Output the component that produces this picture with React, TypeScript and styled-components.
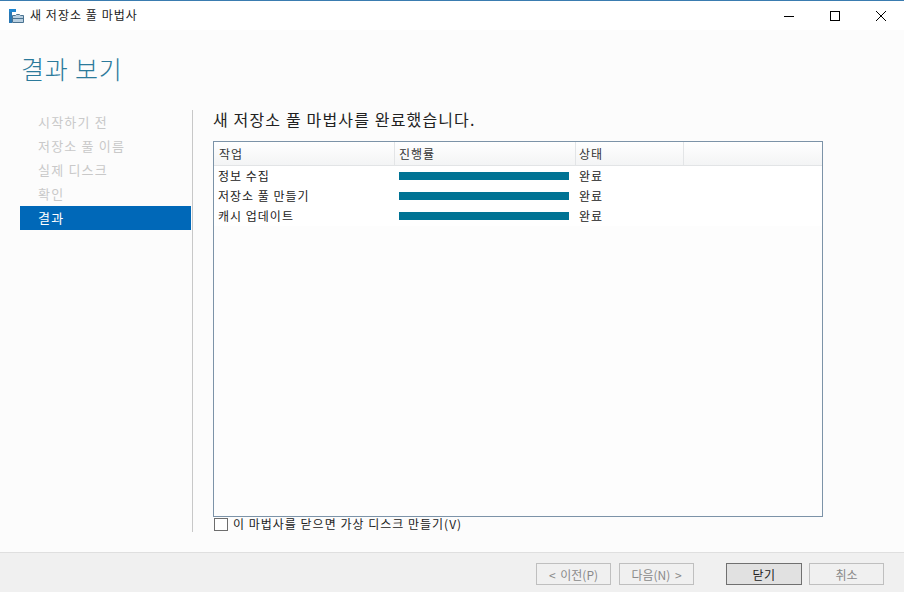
import { createGlobalStyle } from "styled-components";
import styled from "styled-components";

const steps = ["시작하기 전", "저장소 풀 이름", "실제 디스크", "확인", "결과"];
const tasks = ["정보 수집", "저장소 풀 만들기", "캐시 업데이트"];

const GlobalStyle = createGlobalStyle`
  html, body {
    margin: 0;
    padding: 0;
  }
  body {
    font-family: "Noto Sans CJK KR", "Liberation Sans", sans-serif;
    color: #1a1a1a;
  }
`;

export default function App() {
  return (
    <Window>
      <GlobalStyle />
      <TitleBar>
        <AppIcon viewBox="0 0 15 14">
          <rect x="0" y="0" width="7" height="3" fill="#1f86d0" />
          <rect x="0" y="3" width="3" height="11" fill="#2a78b4" />
          <path d="M3.5 13.5V6.5h3l1-1h3l1 1h3v7z" fill="#b9cfe0" stroke="#4a7391" strokeWidth="1" />
          <path d="M4 9.5h10" stroke="#4a7391" strokeWidth="1" />
        </AppIcon>
        <TitleText>새 저장소 풀 마법사</TitleText>
        <Controls>
          <ControlButton>
            <svg width="10" height="10" viewBox="0 0 10 10">
              <path d="M0 5.5h10" stroke="#000" strokeWidth="1" />
            </svg>
          </ControlButton>
          <ControlButton>
            <svg width="10" height="10" viewBox="0 0 10 10">
              <rect x="0.5" y="0.5" width="9" height="9" fill="none" stroke="#000" strokeWidth="1" />
            </svg>
          </ControlButton>
          <ControlButton>
            <svg width="10" height="10" viewBox="0 0 10 10">
              <path d="M0 0l10 10M10 0L0 10" stroke="#000" strokeWidth="1" />
            </svg>
          </ControlButton>
        </Controls>
      </TitleBar>

      <Content>
        <PageTitle>결과 보기</PageTitle>
        <Columns>
          <Sidebar>
            {steps.map((step) => (
              <Step key={step} $active={step === "결과"}>
                {step}
              </Step>
            ))}
          </Sidebar>
          <Main>
            <Heading>새 저장소 풀 마법사를 완료했습니다.</Heading>
            <Table>
              <HeaderRow>
                <HeaderCell $width={181} $inset={5}>작업</HeaderCell>
                <HeaderCell $width={181} $inset={4}>진행률</HeaderCell>
                <HeaderCell $width={108} $inset={3}>상태</HeaderCell>
              </HeaderRow>
              <Rows>
                {tasks.map((task) => (
                  <Row key={task}>
                    <TaskName>{task}</TaskName>
                    <ProgressCell>
                      <ProgressBar />
                    </ProgressCell>
                    <StatusCell>완료</StatusCell>
                  </Row>
                ))}
              </Rows>
            </Table>
            <CheckRow>
              <CheckBox />
              <CheckLabel>이 마법사를 닫으면 가상 디스크 만들기(V)</CheckLabel>
            </CheckRow>
          </Main>
        </Columns>
      </Content>

      <Footer>
        <FooterButton disabled>&lt; 이전(P)</FooterButton>
        <FooterButton disabled>다음(N) &gt;</FooterButton>
        <CloseButton>닫기</CloseButton>
        <FooterButton disabled>취소</FooterButton>
      </Footer>
    </Window>
  );
}

const Window = styled.div`
  width: 904px;
  height: 592px;
  display: flex;
  flex-direction: column;
  background: #fcfcfc;
  overflow: hidden;
`;

const TitleBar = styled.div`
  height: 30px;
  flex: none;
  display: flex;
  align-items: center;
  padding-left: 9px;
  background: #fff;
  border-top: 1px solid #3a7cb0;
  box-sizing: border-box;
`;

const AppIcon = styled.svg`
  width: 15px;
  height: 14px;
  margin-right: 6px;
`;

const TitleText = styled.span`
  font-size: 12px;
  line-height: 26px;
  margin-bottom: 2px;
  letter-spacing: 1.05px;
  color: #222;
`;

const Controls = styled.div`
  margin-left: auto;
  display: flex;
`;

const ControlButton = styled.div`
  width: 46px;
  height: 29px;
  display: flex;
  align-items: center;
  justify-content: center;
`;

const Content = styled.div`
  flex: 1;
  min-height: 0;
  display: flex;
  flex-direction: column;
  padding: 0 0 20px 20px;
`;

const PageTitle = styled.h1`
  margin: 19px 0 0 1px;
  height: 61px;
  font-size: 25px;
  line-height: 38px;
  font-weight: 300;
  letter-spacing: 0.8px;
  color: #2b7a9b;
`;

const Columns = styled.div`
  flex: 1;
  min-height: 0;
  display: flex;
`;

const Sidebar = styled.div`
  width: 172px;
  flex: none;
  border-right: 1px solid #c8c8c8;
  display: flex;
  flex-direction: column;
`;

const Step = styled.div<{ $active: boolean }>`
  width: 171px;
  height: 24px;
  line-height: 24px;
  padding-left: 18px;
  box-sizing: border-box;
  font-size: 13px;
  letter-spacing: 1.2px;
  color: ${(p) => (p.$active ? "#fff" : "#c9c9c9")};
  background: ${(p) => (p.$active ? "#0068b8" : "transparent")};
`;

const Main = styled.div`
  flex: 1;
  min-width: 0;
  padding-left: 20px;
  display: flex;
  flex-direction: column;
`;

const Heading = styled.div`
  font-size: 16px;
  line-height: 19px;
  letter-spacing: 1.15px;
  color: #222;
  margin-bottom: 12px;
`;

const Table = styled.div`
  width: 610px;
  height: 376px;
  flex: none;
  box-sizing: border-box;
  border: 1px solid #7c93a8;
  background: #fdfdfd;
  display: flex;
  flex-direction: column;
`;

const HeaderRow = styled.div`
  height: 24px;
  flex: none;
  display: flex;
  box-sizing: border-box;
  border-bottom: 1px solid #e2e4e6;
  background: linear-gradient(#ffffff, #f3f4f5);
`;

const HeaderCell = styled.div<{ $width: number; $inset: number }>`
  width: ${(p) => p.$width}px;
  box-sizing: border-box;
  border-right: 1px solid #e3e5e7;
  padding-left: ${(p) => p.$inset}px;
  font-size: 12px;
  line-height: 23px;
  letter-spacing: 1px;
  color: #333;
`;

const Rows = styled.div`
  background: #fff;
  display: flex;
  flex-direction: column;
`;

const Row = styled.div`
  height: 20px;
  line-height: 20px;
  display: flex;
  align-items: flex-start;
  font-size: 12px;
  letter-spacing: 1px;
`;

const TaskName = styled.div`
  width: 181px;
  padding-left: 4px;
  box-sizing: border-box;
  color: #222;
`;

const ProgressCell = styled.div`
  width: 181px;
  padding: 6px 0 0 4px;
  box-sizing: border-box;
`;

const ProgressBar = styled.div`
  width: 170px;
  height: 8px;
  background: #007394;
`;

const StatusCell = styled.div`
  padding-left: 3px;
  color: #222;
`;

const CheckRow = styled.div`
  display: flex;
  align-items: center;
  height: 15px;
  padding-left: 1px;
`;

const CheckBox = styled.span`
  width: 14px;
  height: 13px;
  box-sizing: border-box;
  border: 1px solid #6d6d6d;
  background: #fff;
  margin-right: 5px;
`;

const CheckLabel = styled.span`
  font-size: 12px;
  line-height: 13px;
  margin-bottom: 2px;
  letter-spacing: 1px;
  color: #222;
`;

const Footer = styled.div`
  height: 40px;
  flex: none;
  display: flex;
  align-items: center;
  padding: 3px 20px 0 536px;
  box-sizing: border-box;
  background: #f0f0f0;
  border-top: 1px solid #dfdfdf;
`;

const FooterButton = styled.button`
  width: 75px;
  height: 22px;
  padding: 0;
  margin-right: 8px;
  box-sizing: border-box;
  border: 1px solid #bfbfbf;
  background: #f0f0f0;
  font-family: inherit;
  font-size: 12px;
  word-spacing: 2px;
  color: #8a8a8a;
  &:last-child {
    margin-right: 0;
  }
`;

const CloseButton = styled.button`
  width: 76px;
  height: 22px;
  padding: 0;
  margin: 0 7px 0 24px;
  box-sizing: border-box;
  border: 1px solid #707070;
  background: #e1e1e1;
  font-family: inherit;
  font-size: 12px;
  letter-spacing: 0.5px;
  color: #222;
`;
